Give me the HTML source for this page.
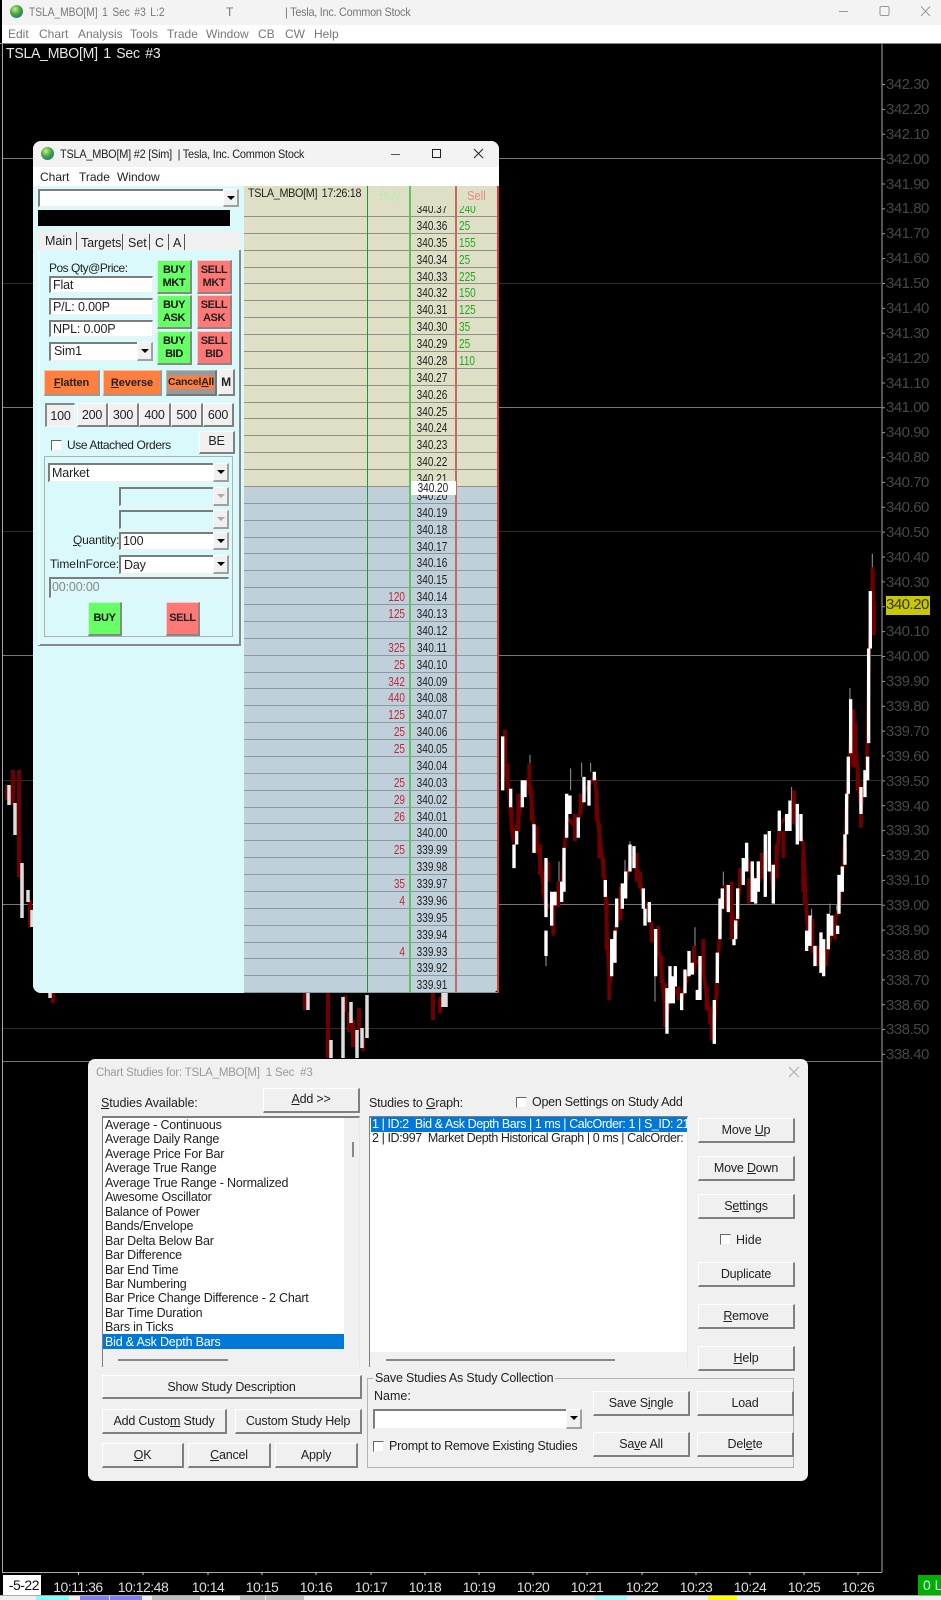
<!DOCTYPE html>
<html><head><meta charset="utf-8"><title>TSLA_MBO[M]</title>
<style>
html,body{margin:0;padding:0}
body{width:941px;height:1600px;background:#000;position:relative;overflow:hidden;font-family:"Liberation Sans",sans-serif;font-size:12px;color:#222}
.a{position:absolute;box-sizing:border-box}
.t{position:absolute;white-space:nowrap;line-height:16px;height:16px;transform-origin:left center}
.pl{position:absolute;left:886px;font-size:15px;line-height:16px;color:#474747;letter-spacing:-.5px;white-space:nowrap}
.tm{position:absolute;top:1579px;font-size:14px;line-height:16px;color:#ddd;transform:translateX(-50%);letter-spacing:-.5px;white-space:nowrap}
.g{position:absolute;border-radius:50%;background:radial-gradient(circle at 38% 32%,#c8f090,#4aa83c 42%,#1f6f88 85%)}
.b{position:absolute;box-sizing:border-box;background:#f0f0f0;border-style:solid;border-width:1px 2px 2px 1px;border-color:#fff #808080 #808080 #fff;display:flex;align-items:center;justify-content:center;font-size:12.5px;letter-spacing:-.2px;color:#222;white-space:nowrap}
.c{position:absolute;box-sizing:border-box;background:#fff;border-style:solid;border-width:2px 1px 1px 2px;border-color:#7d7d7d #f0f0f0 #f0f0f0 #7d7d7d;line-height:15px;padding-left:2px;font-size:12.5px;letter-spacing:-.15px;color:#222;white-space:nowrap}
.dd{position:absolute;right:-1px;top:-2px;bottom:-1px;width:16px;background:#f0f0f0;border-style:solid;border-width:1px 2px 2px 1px;border-color:#fff #a0a0a0 #a0a0a0 #fff;box-sizing:border-box}
.dd:after{content:"";position:absolute;left:3px;top:6px;border:4px solid transparent;border-top:4px solid #000}
.dis:after{border-top-color:#aaa}
.cb{position:absolute;box-sizing:border-box;width:11px;height:11px;background:#fff;border-style:solid;border-width:1px;border-color:#666 #eee #eee #666}
.o{background:#ff7f3f;font-weight:bold;font-size:11px;letter-spacing:-.1px;border-color:#ffc0a0 #999 #999 #ffc0a0;color:#222}
.gr{background:#66ff66;font-weight:bold;text-align:center;line-height:13px;font-size:11px;letter-spacing:-.4px;flex-direction:column;color:#111;border-color:#c8ffc8 #888 #888 #c8ffc8}
.rd{background:#ff7878;font-weight:bold;text-align:center;line-height:13px;font-size:11px;letter-spacing:-.4px;flex-direction:column;color:#222;border-color:#ffc8c8 #888 #888 #ffc8c8}
#rows{position:absolute;left:244px;top:205.5px;width:253px;height:788px;overflow:hidden}
#in{position:absolute;left:0;top:-5.5px;width:253px}
.r{position:relative;height:16.88px;box-sizing:border-box;border-bottom:1px solid #8f9188}
.r.u{border-bottom-color:#8b99a2}
.r i,.r b,.r s{position:absolute;top:1px;font-style:normal;font-weight:normal;text-decoration:none;font-size:13px;line-height:15px;display:block;transform:scaleX(.77)}
.r b{left:158px;width:60px;text-align:center;color:#222}
.r i{left:110px;width:51px;text-align:right;color:#c2283c;transform-origin:right}
.r s{left:215px;width:38px;text-align:left;color:#22a822;transform-origin:left}
.li{position:absolute;left:105px;font-size:12.5px;line-height:14.45px;color:#222;white-space:nowrap;letter-spacing:-.2px}
</style></head><body>

<!-- main chart -->
<svg class="a" style="left:0;top:0" width="941" height="1600" viewBox="0 0 941 1600">
<path d="M2.5 43V1572M882 43V1572M2 1572.5H882" stroke="#a8a8a8" fill="none"/>
<path d="M0 43.5H941" stroke="#888"/>
<path d="M3 158.5H882M3 407.5H882M3 655.5H882M3 904.5H882M3 1061.5H882" stroke="#777"/>
<path d="M3 283.5H882M3 531.5H882M3 780.5H882M3 1028.5H882" stroke="#2e2e2e"/>
<path d="M883.5 84V1060" stroke="#999" stroke-width="3" stroke-dasharray="1 23.87" fill="none"/>
<path d="M78.5 1572V1575M143 1572V1575M208 1572V1575M262 1572V1575M316 1572V1575M371 1572V1575M425 1572V1575M479 1572V1575M533 1572V1575M587 1572V1575M642 1572V1575M696 1572V1575M750 1572V1575M804 1572V1575M858 1572V1575" stroke="#ccc"/>
<g transform="translate(490 520) scale(.3333 .338)" fill="none">
<path stroke="#999" stroke-width="3" d="M120 695V720M242 735V800M275 718V760M302 718V745M1147 100V140M1080 497V530M700 1040V1085M905 790V830M615 1205V1260M420 950V970M965 1150V1180M168 1290V1320M1040 1140V1180M1020 1135V1165M495 1350V1425M207 1010V1070M405 1005V1050"/>
<path stroke="#6e0000" stroke-width="11" stroke-linejoin="round" d="M40 700L55 790L70 950L90 860L100 800L118 760L130 900L150 1000L168 1150L190 1130L215 1100L230 880L260 910L285 800L315 760L325 900L345 1070L352 1250L360 1370L378 1200L400 1100L425 1000L445 1040L460 1120L490 1220L510 1290L528 1480L545 1380L575 1420L600 1320L635 1300L655 1440L672 1530L682 1340L695 1120L725 1150L738 1230L750 1060L770 1000L800 1090L835 980L850 1100L870 900L905 860L940 960L948 1130L955 1240L985 1300L1003 1320L1030 1200L1047 1150L1060 1020L1075 760L1085 600L1100 700L1113 860L1130 740L1138 400L1148 150L1152 330"/>
<path stroke="#6e0000" stroke-width="12" d="M45 620V720M52 720V790M65 850V920M85 810V920M118 720V810M125 800V890M140 905V985M150 960V1050M160 1040V1110M175 1010V1070M205 1070V1145M190 1140V1230M255 870V950M272 810V870M320 800V890M328 900V1000M340 1000V1060M350 1120V1270M358 1320V1420M392 1085V1185M440 985V1070M450 1040V1090M485 1190V1250M505 1200V1290M515 1290V1370M525 1370V1500M565 1380V1420M612 1260V1340M640 1240V1340M650 1380V1450M660 1440V1490M665 1460V1540M680 1370V1410M705 1080V1150M725 1070V1240M750 1030V1075M777 1060V1135M815 985V1060M860 960V1060M880 920V1000M912 800V900M940 980V1100M945 1100V1140M967 1180V1280M985 1260V1320M1008 1280V1320M1035 1170V1240M1065 960V1000M1090 560V730M1097 600V730M1103 730V800M1113 870V910M1148 140V240M1152 240V340"/>
<path stroke="#fff" stroke-width="10" d="M38 640V800M62 795V850M72 960V1030M80 920V960M97 770V850M105 770V820M132 900V985M168 1000V1175M168 1215V1290M185 1100V1200M195 1100V1140M215 1070V1130M222 970V1100M230 810V940M240 815V870M265 880V940M282 760V835M297 770V845M313 745V770M346 1065V1115M365 1240V1350M375 1215V1310M380 1120V1205M397 1075V1150M407 1040V1120M420 960V1040M432 965V1030M460 1090V1150M465 1150V1200M478 1130V1190M497 1210V1350M531 1385V1520M540 1320V1430M550 1350V1430M556 1320V1380M575 1400V1450M585 1330V1400M597 1275V1350M607 1310V1345M622 1390V1420M630 1290V1420M673 1420V1550M682 1280V1370M690 1120V1240M697 1090V1150M715 1080V1160M732 1240V1258M737 1185V1240M743 1090V1180M760 1000V1080M770 955V1040M787 1010V1130M797 1060V1135M805 1010V1100M826 930V1115M838 920V1040M850 1020V1135M868 860V920M890 870V920M900 830V920M922 840V960M933 870V950M950 1215V1275M960 1170V1260M975 1260V1320M993 1220V1340M1001 1240V1350M1015 1165V1270M1025 1170V1230M1043 1200V1225M1047 1050V1165M1057 1025V1100M1065 930V1020M1070 810V930M1075 700V810M1082 530V690M1113 790V870M1125 740V820M1133 700V770M1136 380V660M1141 210V380"/>
</g>
<path stroke="#6e0000" stroke-width="4" fill="none" d="M7 785V800M13 770V805M19 770V877M22 870V900M30 900V927M53 993V1003M305 993V1010M328 993V1058M345 995V1012M349 1012V1032M353 1020V1047M359 1008V1030M363 1037V1051M433 993V1020M440 997V1013"/>
<path stroke="#ddd" stroke-width="3.500" fill="none" d="M9 785V805M15 803V835M22 863V918M28 890V902M32 910V927M50 993V998M308 993V1010M331 1040V1058M343 997V1058M351 1002V1023M357 1030V1058M362 1028V1048M367 995V1038M443 993V1007M446 993V1007"/>
</svg>

<!-- main title + menu -->
<div class="a" style="left:2px;top:0;width:939px;height:25px;background:#f3f3f3"></div>
<div class="a" style="left:2px;top:25px;width:939px;height:18px;background:#fff"></div>
<div class="g" style="left:10px;top:5px;width:13px;height:13px"></div>
<div class="t" style="left:29px;top:4px;color:#777;transform:scaleX(.85);word-spacing:2px">TSLA_MBO[M] 1 Sec #3 L:2</div>
<div class="t" style="left:226px;top:4px;color:#777">T</div>
<div class="t" style="left:285px;top:4px;color:#777;transform:scaleX(.91);letter-spacing:-.3px">| Tesla, Inc. Common Stock</div>
<svg class="a" style="left:835px;top:3px" width="106" height="18" fill="none" stroke="#999"><path d="M4 8.500H13"/><rect x="45" y="3.500" width="9" height="9" rx="1.500"/><path d="M86 3.500L95 13M95 3.500L86 13"/></svg>
<div class="t" style="left:8px;top:26px;color:#777">Edit</div>
<div class="t" style="left:39px;top:26px;color:#777">Chart</div>
<div class="t" style="left:78px;top:26px;color:#777">Analysis</div>
<div class="t" style="left:130px;top:26px;color:#777">Tools</div>
<div class="t" style="left:167px;top:26px;color:#777">Trade</div>
<div class="t" style="left:206px;top:26px;color:#777">Window</div>
<div class="t" style="left:258px;top:26px;color:#777">CB</div>
<div class="t" style="left:285px;top:26px;color:#777">CW</div>
<div class="t" style="left:314px;top:26px;color:#777">Help</div>
<div class="t" style="left:6px;top:46px;color:#e8e8e8;font-size:15px;letter-spacing:-.3px;word-spacing:2px;transform:scaleX(.94)">TSLA_MBO[M] 1 Sec #3</div>

<!-- price axis -->
<div class="pl" style="top:77px">342.30</div><div class="pl" style="top:102px">342.20</div><div class="pl" style="top:127px">342.10</div><div class="pl" style="top:152px">342.00</div><div class="pl" style="top:177px">341.90</div><div class="pl" style="top:201px">341.80</div><div class="pl" style="top:226px">341.70</div><div class="pl" style="top:251px">341.60</div><div class="pl" style="top:276px">341.50</div><div class="pl" style="top:301px">341.40</div><div class="pl" style="top:326px">341.30</div><div class="pl" style="top:351px">341.20</div><div class="pl" style="top:376px">341.10</div><div class="pl" style="top:400px">341.00</div><div class="pl" style="top:425px">340.90</div><div class="pl" style="top:450px">340.80</div><div class="pl" style="top:475px">340.70</div><div class="pl" style="top:500px">340.60</div><div class="pl" style="top:525px">340.50</div><div class="pl" style="top:550px">340.40</div><div class="pl" style="top:575px">340.30</div>
<div class="a" style="left:886px;top:596px;width:44px;height:19px;background:#c8c800"></div>
<div class="pl" style="top:597px;color:#333">340.20</div>
<div class="pl" style="top:624px">340.10</div><div class="pl" style="top:649px">340.00</div><div class="pl" style="top:674px">339.90</div><div class="pl" style="top:699px">339.80</div><div class="pl" style="top:724px">339.70</div><div class="pl" style="top:749px">339.60</div><div class="pl" style="top:774px">339.50</div><div class="pl" style="top:799px">339.40</div><div class="pl" style="top:823px">339.30</div><div class="pl" style="top:848px">339.20</div><div class="pl" style="top:873px">339.10</div><div class="pl" style="top:898px">339.00</div><div class="pl" style="top:923px">338.90</div><div class="pl" style="top:948px">338.80</div><div class="pl" style="top:973px">338.70</div><div class="pl" style="top:998px">338.60</div><div class="pl" style="top:1022px">338.50</div><div class="pl" style="top:1047px">338.40</div>

<!-- time axis -->
<div class="a" style="left:3px;top:1575px;width:38px;height:20px;background:#fff;overflow:hidden;color:#111;font-size:14px;line-height:20px;letter-spacing:-.5px;text-align:right;padding-right:2px">-5-22</div>
<div class="tm" style="left:78px">10:11:36</div><div class="tm" style="left:143px">10:12:48</div><div class="tm" style="left:208px">10:14</div><div class="tm" style="left:262px">10:15</div><div class="tm" style="left:316px">10:16</div><div class="tm" style="left:371px">10:17</div><div class="tm" style="left:425px">10:18</div><div class="tm" style="left:479px">10:19</div><div class="tm" style="left:533px">10:20</div><div class="tm" style="left:587px">10:21</div><div class="tm" style="left:642px">10:22</div><div class="tm" style="left:696px">10:23</div><div class="tm" style="left:750px">10:24</div><div class="tm" style="left:804px">10:25</div><div class="tm" style="left:858px">10:26</div>
<div class="a" style="left:918px;top:1575px;width:23px;height:20px;background:#00b000;color:#dff;font-size:14px;line-height:20px;padding-left:5px;overflow:hidden;white-space:nowrap">0 L</div>

<!-- bottom strip -->
<div class="a" style="left:0;top:1595px;width:941px;height:5px;background:#f0f0f0;border-top:1px solid #aaa"></div>
<div class="a" style="left:36px;top:1596px;width:33px;height:4px;background:#80ffff"></div>
<div class="a" style="left:80px;top:1596px;width:29px;height:4px;background:#8080f0"></div>
<div class="a" style="left:110px;top:1596px;width:32px;height:4px;background:#8080f0"></div>
<div class="a" style="left:152px;top:1596px;width:48px;height:4px;background:#c0c0c0"></div>
<div class="a" style="left:240px;top:1596px;width:25px;height:4px;background:#c0c0c0"></div>
<div class="a" style="left:266px;top:1596px;width:38px;height:4px;background:#c0c0c0"></div>
<div class="a" style="left:595px;top:1596px;width:32px;height:4px;background:#a8ffff"></div>
<div class="a" style="left:708px;top:1596px;width:29px;height:4px;background:#ffff00"></div>

<!-- DOM window -->
<div class="a" style="left:33px;top:141px;width:466px;height:852px;background:#fff;border-radius:8px;overflow:hidden">
  <div class="a" style="left:0;top:0;width:466px;height:26px;background:#f3f3f3"></div>
  <div class="a" style="left:0;top:45px;width:211px;height:807px;background:#d9f9fb"></div>
  <div class="a" style="left:211px;top:45px;width:255px;height:301px;background:#dfdfc6"></div>
  <div class="a" style="left:211px;top:346px;width:255px;height:506px;background:#c0d0da"></div>
</div>
<div class="g" style="left:41px;top:147px;width:13px;height:13px"></div>
<div class="t" style="left:60px;top:146px;color:#222;transform:scaleX(.91);letter-spacing:-.25px">TSLA_MBO[M] #2 [Sim]&nbsp; | Tesla, Inc. Common Stock</div>
<svg class="a" style="left:385px;top:145px" width="105" height="18" fill="none" stroke="#222"><path d="M6 9.500H15" stroke="#555"/><rect x="47.500" y="4.500" width="8" height="8"/><path d="M89 4L98 13M98 4L89 13"/></svg>
<div class="t" style="left:40px;top:169px">Chart</div>
<div class="t" style="left:79px;top:169px">Trade</div>
<div class="t" style="left:117px;top:169px">Window</div>

<!-- DOM ladder -->
<div id="rows"><div id="in">
<div class="r"><b>340.37</b><s>240</s></div>
<div class="r"><b>340.36</b><s>25</s></div>
<div class="r"><b>340.35</b><s>155</s></div>
<div class="r"><b>340.34</b><s>25</s></div>
<div class="r"><b>340.33</b><s>225</s></div>
<div class="r"><b>340.32</b><s>150</s></div>
<div class="r"><b>340.31</b><s>125</s></div>
<div class="r"><b>340.30</b><s>35</s></div>
<div class="r"><b>340.29</b><s>25</s></div>
<div class="r"><b>340.28</b><s>110</s></div>
<div class="r"><b>340.27</b></div>
<div class="r"><b>340.26</b></div>
<div class="r"><b>340.25</b></div>
<div class="r"><b>340.24</b></div>
<div class="r"><b>340.23</b></div>
<div class="r"><b>340.22</b></div>
<div class="r"><b>340.21</b></div>
<div class="r u"><b>340.20</b></div>
<div class="r u"><b>340.19</b></div>
<div class="r u"><b>340.18</b></div>
<div class="r u"><b>340.17</b></div>
<div class="r u"><b>340.16</b></div>
<div class="r u"><b>340.15</b></div>
<div class="r u"><i>120</i><b>340.14</b></div>
<div class="r u"><i>125</i><b>340.13</b></div>
<div class="r u"><b>340.12</b></div>
<div class="r u"><i>325</i><b>340.11</b></div>
<div class="r u"><i>25</i><b>340.10</b></div>
<div class="r u"><i>342</i><b>340.09</b></div>
<div class="r u"><i>440</i><b>340.08</b></div>
<div class="r u"><i>125</i><b>340.07</b></div>
<div class="r u"><i>25</i><b>340.06</b></div>
<div class="r u"><i>25</i><b>340.05</b></div>
<div class="r u"><b>340.04</b></div>
<div class="r u"><i>25</i><b>340.03</b></div>
<div class="r u"><i>29</i><b>340.02</b></div>
<div class="r u"><i>26</i><b>340.01</b></div>
<div class="r u"><b>340.00</b></div>
<div class="r u"><i>25</i><b>339.99</b></div>
<div class="r u"><b>339.98</b></div>
<div class="r u"><i>35</i><b>339.97</b></div>
<div class="r u"><i>4</i><b>339.96</b></div>
<div class="r u"><b>339.95</b></div>
<div class="r u"><b>339.94</b></div>
<div class="r u"><i>4</i><b>339.93</b></div>
<div class="r u"><b>339.92</b></div>
<div class="r u"><b>339.91</b></div>
</div></div>
<div class="t" style="left:248px;top:185px;color:#222;font-size:12px;letter-spacing:-.35px;word-spacing:2px;transform:scaleX(.9)">TSLA_MBO[M] 17:26:18</div>
<div class="t" style="left:379px;top:188px;color:#b9ecb4;font-size:12.500px">Buy</div>
<div class="t" style="left:467px;top:188px;color:#e98a84;font-size:12.500px;transform:scaleX(.9)">Sell</div>
<div class="a" style="left:367px;top:186px;width:1px;height:807px;background:#1e9a2a"></div>
<div class="a" style="left:408.500px;top:186px;width:2px;height:807px;background:#5fc064"></div>
<div class="a" style="left:455px;top:186px;width:1.500px;height:807px;background:#c46a62"></div>
<div class="a" style="left:497px;top:186px;width:1.500px;height:807px;background:#d83a34"></div>
<div class="a" style="left:410.500px;top:481px;width:45px;height:13.500px;background:#fff;text-align:center;font-size:13px;line-height:14px"><span style="display:inline-block;transform:scaleX(.77)">340.20</span></div>

<!-- left panel -->
<div class="c" style="left:38px;top:189px;width:201px;height:18px"><div class="dd"></div></div>
<div class="a" style="left:38px;top:210px;width:192px;height:16px;background:#000"></div>
<div class="a" style="left:38px;top:231px;width:203px;height:20px;background:#f0f0f0"></div>
<div class="t" style="left:45px;top:233px;font-size:12.500px">Main</div>
<div class="t" style="left:81px;top:235px;font-size:12.500px;letter-spacing:-.1px">Targets</div>
<div class="t" style="left:128px;top:235px;font-size:12.500px">Set</div>
<div class="t" style="left:155px;top:235px;font-size:12.500px">C</div>
<div class="t" style="left:173px;top:235px;font-size:12.500px">A</div>
<div class="a" style="left:76px;top:232px;width:1px;height:19px;background:#555"></div>
<div class="a" style="left:122px;top:234px;width:1px;height:17px;background:#555"></div>
<div class="a" style="left:149px;top:234px;width:1px;height:17px;background:#555"></div>
<div class="a" style="left:168px;top:234px;width:1px;height:17px;background:#555"></div>
<div class="a" style="left:184px;top:234px;width:1px;height:17px;background:#555"></div>
<div class="a" style="left:38px;top:250px;width:203px;height:396px;background:#d9f9fb;border-right:2px solid #8a8a8a;border-bottom:2px solid #8a8a8a"></div>
<div class="a" style="left:38px;top:250px;width:2px;height:395px;background:#eefcfd"></div>

<div class="t" style="left:49px;top:260px;font-size:12px;letter-spacing:-.5px">Pos Qty@Price:</div>
<div class="c" style="left:49px;top:276px;width:104px;height:17px">Flat</div>
<div class="c" style="left:49px;top:298px;width:104px;height:17px">P/L: 0.00P</div>
<div class="c" style="left:49px;top:320px;width:104px;height:17px">NPL: 0.00P</div>
<div class="c" style="left:49px;top:342px;width:104px;height:19px;padding-left:3px">Sim1<div class="dd"></div></div>

<div class="b gr" style="left:157px;top:260px;width:35px;height:34px">BUY<span>MKT</span></div>
<div class="b gr" style="left:157px;top:295px;width:35px;height:34px">BUY<span>ASK</span></div>
<div class="b gr" style="left:157px;top:331px;width:35px;height:34px">BUY<span>BID</span></div>
<div class="b rd" style="left:197px;top:260px;width:35px;height:34px">SELL<span>MKT</span></div>
<div class="b rd" style="left:197px;top:295px;width:35px;height:34px">SELL<span>ASK</span></div>
<div class="b rd" style="left:197px;top:331px;width:35px;height:34px">SELL<span>BID</span></div>

<div class="b o" style="left:44px;top:370px;width:56px;height:26px"><span><u>F</u>latten</span></div>
<div class="b o" style="left:103px;top:370px;width:59px;height:26px"><span><u>R</u>everse</span></div>
<div class="b" style="left:166px;top:370px;width:51px;height:26px;background:#999;border-color:#bbb #777 #777 #bbb"><span style="background:#ff7f3f;font-weight:bold;font-size:10.500px;line-height:13px;letter-spacing:-.2px">Cancel<u>A</u>ll</span></div>
<div class="b" style="left:218px;top:369px;width:17px;height:27px;font-weight:bold;font-size:12px">M</div>

<div class="b" style="left:45px;top:403px;width:30px;height:24px;border-color:#888 #f8f8f8 #f8f8f8 #888;border-width:2px 1px 1px 2px">100</div>
<div class="b" style="left:77px;top:403px;width:31px;height:24px">200</div>
<div class="b" style="left:108px;top:403px;width:31px;height:24px">300</div>
<div class="b" style="left:139px;top:403px;width:32px;height:24px">400</div>
<div class="b" style="left:171px;top:403px;width:32px;height:24px">500</div>
<div class="b" style="left:203px;top:403px;width:31px;height:24px">600</div>
<div class="cb" style="left:51px;top:440px"></div>
<div class="t" style="left:67px;top:437px;font-size:12px;letter-spacing:-.4px">Use Attached Orders</div>
<div class="b" style="left:199px;top:431px;width:36px;height:23px;padding-bottom:2px">BE</div>

<div class="a" style="left:44px;top:456px;width:189px;height:181px;border:1px solid #a8b4b4"></div>
<div class="c" style="left:48px;top:463px;width:181px;height:19px;padding-left:2px;line-height:17px">Market<div class="dd"></div></div>
<div class="c" style="left:119px;top:487px;width:110px;height:19px;background:#d9f9fb"><div class="dd dis"></div></div>
<div class="c" style="left:119px;top:510px;width:110px;height:19px;background:#d9f9fb"><div class="dd dis"></div></div>
<div class="t" style="left:73px;top:532px;letter-spacing:-.2px"><u>Q</u>uantity:</div>
<div class="c" style="left:119px;top:532px;width:110px;height:18px">100<div class="dd"></div></div>
<div class="t" style="left:50px;top:556px;letter-spacing:-.1px">TimeInForce:</div>
<div class="c" style="left:119px;top:555px;width:110px;height:19px;padding-left:3px;line-height:17px">Day<div class="dd"></div></div>
<div class="c" style="left:49px;top:577px;width:180px;height:21px;background:#d9f9fb;color:#888;line-height:17px;padding-left:1px">00:00:00</div>
<div class="b gr" style="left:88px;top:602px;width:34px;height:34px;font-size:11px">BUY</div>
<div class="b rd" style="left:166px;top:602px;width:34px;height:34px;font-size:11px">SELL</div>

<!-- Chart Studies dialog -->
<div class="a" style="left:88px;top:1059px;width:720px;height:422px;background:#f0f0f0;border-radius:7px"></div>
<div class="t" style="left:96px;top:1065px;color:#9a9a9a;font-size:11.500px;letter-spacing:-.2px">Chart Studies for: TSLA_MBO[M]&nbsp; 1 Sec&nbsp; #3</div>
<svg class="a" style="left:788px;top:1066px" width="12" height="12" fill="none" stroke="#aaa"><path d="M1 1L11 11M11 1L1 11"/></svg>

<div class="t" style="left:101px;top:1095px;font-size:12.500px;letter-spacing:-.1px"><u>S</u>tudies Available:</div>
<div class="b" style="left:263px;top:1088px;width:97px;height:25px;padding-bottom:3px"><span><u>A</u>dd &gt;&gt;</span></div>
<div class="a" style="left:102px;top:1116px;width:258px;height:251px;background:#f0f0f0;border-top:2px solid #7d7d7d;border-left:1px solid #7d7d7d;border-right:1px solid #e8e8e8"></div>
<div class="a" style="left:103px;top:1118px;width:241px;height:231px;background:#fff"></div>
<div class="a" style="left:103px;top:1334px;width:241px;height:15px;background:#0078d7"></div>
<div class="a" style="left:352px;top:1142px;width:2px;height:15px;background:#888"></div>
<div class="a" style="left:118px;top:1359px;width:110px;height:1.500px;background:#888"></div>
<div class="li" style="top:1118px">Average - Continuous<br>Average Daily Range<br>Average Price For Bar<br>Average True Range<br>Average True Range - Normalized<br>Awesome Oscillator<br>Balance of Power<br>Bands/Envelope<br>Bar Delta Below Bar<br>Bar Difference<br>Bar End Time<br>Bar Numbering<br>Bar Price Change Difference - 2 Chart<br>Bar Time Duration<br>Bars in Ticks<br><span style="color:#fff">Bid &amp; Ask Depth Bars</span></div>

<div class="t" style="left:369px;top:1095px;font-size:12.500px;letter-spacing:-.2px">Studies to <u>G</u>raph:</div>
<div class="cb" style="left:516px;top:1097px"></div>
<div class="t" style="left:532px;top:1094px;font-size:12.500px;letter-spacing:-.25px">Open Settings on Study Add</div>
<div class="a" style="left:369px;top:1116px;width:319px;height:251px;background:#f0f0f0;border-top:2px solid #7d7d7d;border-left:1px solid #7d7d7d;border-right:1px solid #e8e8e8"></div>
<div class="a" style="left:370px;top:1118px;width:317px;height:234px;background:#fff"></div>
<div class="a" style="left:371px;top:1117px;width:316px;height:15px;background:#0078d7"></div>
<div class="a" style="left:386px;top:1359px;width:229px;height:1.500px;background:#888"></div>
<div class="a" style="left:372px;top:1117px;width:315px;height:30px;overflow:hidden;font-size:12.500px;line-height:14.450px;white-space:nowrap;letter-spacing:-.42px"><span style="color:#fff">1 | ID:2&nbsp; Bid &amp; Ask Depth Bars | 1 ms | CalcOrder: 1 | S_ID: 21</span><br>2 | ID:997&nbsp; Market Depth Historical Graph | 0 ms | CalcOrder:</div>

<div class="b" style="left:698px;top:1118px;width:97px;height:25px"><span>Move <u>U</u>p</span></div>
<div class="b" style="left:698px;top:1156px;width:97px;height:25px"><span>Move <u>D</u>own</span></div>
<div class="b" style="left:698px;top:1194px;width:97px;height:25px"><span>S<u>e</u>ttings</span></div>
<div class="cb" style="left:720px;top:1234px"></div>
<div class="t" style="left:736px;top:1232px;font-size:12.500px">Hide</div>
<div class="b" style="left:698px;top:1262px;width:97px;height:25px">Duplicate</div>
<div class="b" style="left:698px;top:1304px;width:97px;height:25px"><span><u>R</u>emove</span></div>
<div class="b" style="left:698px;top:1346px;width:97px;height:25px"><span><u>H</u>elp</span></div>

<div class="b" style="left:102px;top:1375px;width:260px;height:24px">Show Study Description</div>
<div class="b" style="left:102px;top:1409px;width:125px;height:25px"><span>Add Custo<u>m</u> Study</span></div>
<div class="b" style="left:235px;top:1409px;width:127px;height:25px">Custom Study Help</div>
<div class="b" style="left:102px;top:1443px;width:82px;height:25px"><span><u>O</u>K</span></div>
<div class="b" style="left:188px;top:1443px;width:83px;height:25px"><span><u>C</u>ancel</span></div>
<div class="b" style="left:275px;top:1443px;width:83px;height:25px">Apply</div>

<div class="a" style="left:367px;top:1378px;width:427px;height:90px;border:1px solid #b4b4b4"></div>
<div class="t" style="left:373px;top:1370px;background:#f0f0f0;padding:0 2px;font-size:12.500px;letter-spacing:-.2px">Save Studies As Study Collection</div>
<div class="t" style="left:374px;top:1388px;font-size:12.500px">Name:</div>
<div class="c" style="left:373px;top:1409px;width:209px;height:20px"><div class="dd"></div></div>
<div class="cb" style="left:373px;top:1441px"></div>
<div class="t" style="left:389px;top:1438px;font-size:12.500px;letter-spacing:-.25px">Prompt to Remove Existing Studies</div>
<div class="b" style="left:593px;top:1391px;width:97px;height:25px"><span>Save S<u>i</u>ngle</span></div>
<div class="b" style="left:697px;top:1391px;width:97px;height:25px">Load</div>
<div class="b" style="left:593px;top:1432px;width:97px;height:25px"><span>Sa<u>v</u>e All</span></div>
<div class="b" style="left:697px;top:1432px;width:97px;height:25px"><span>Del<u>e</u>te</span></div>

</body></html>
